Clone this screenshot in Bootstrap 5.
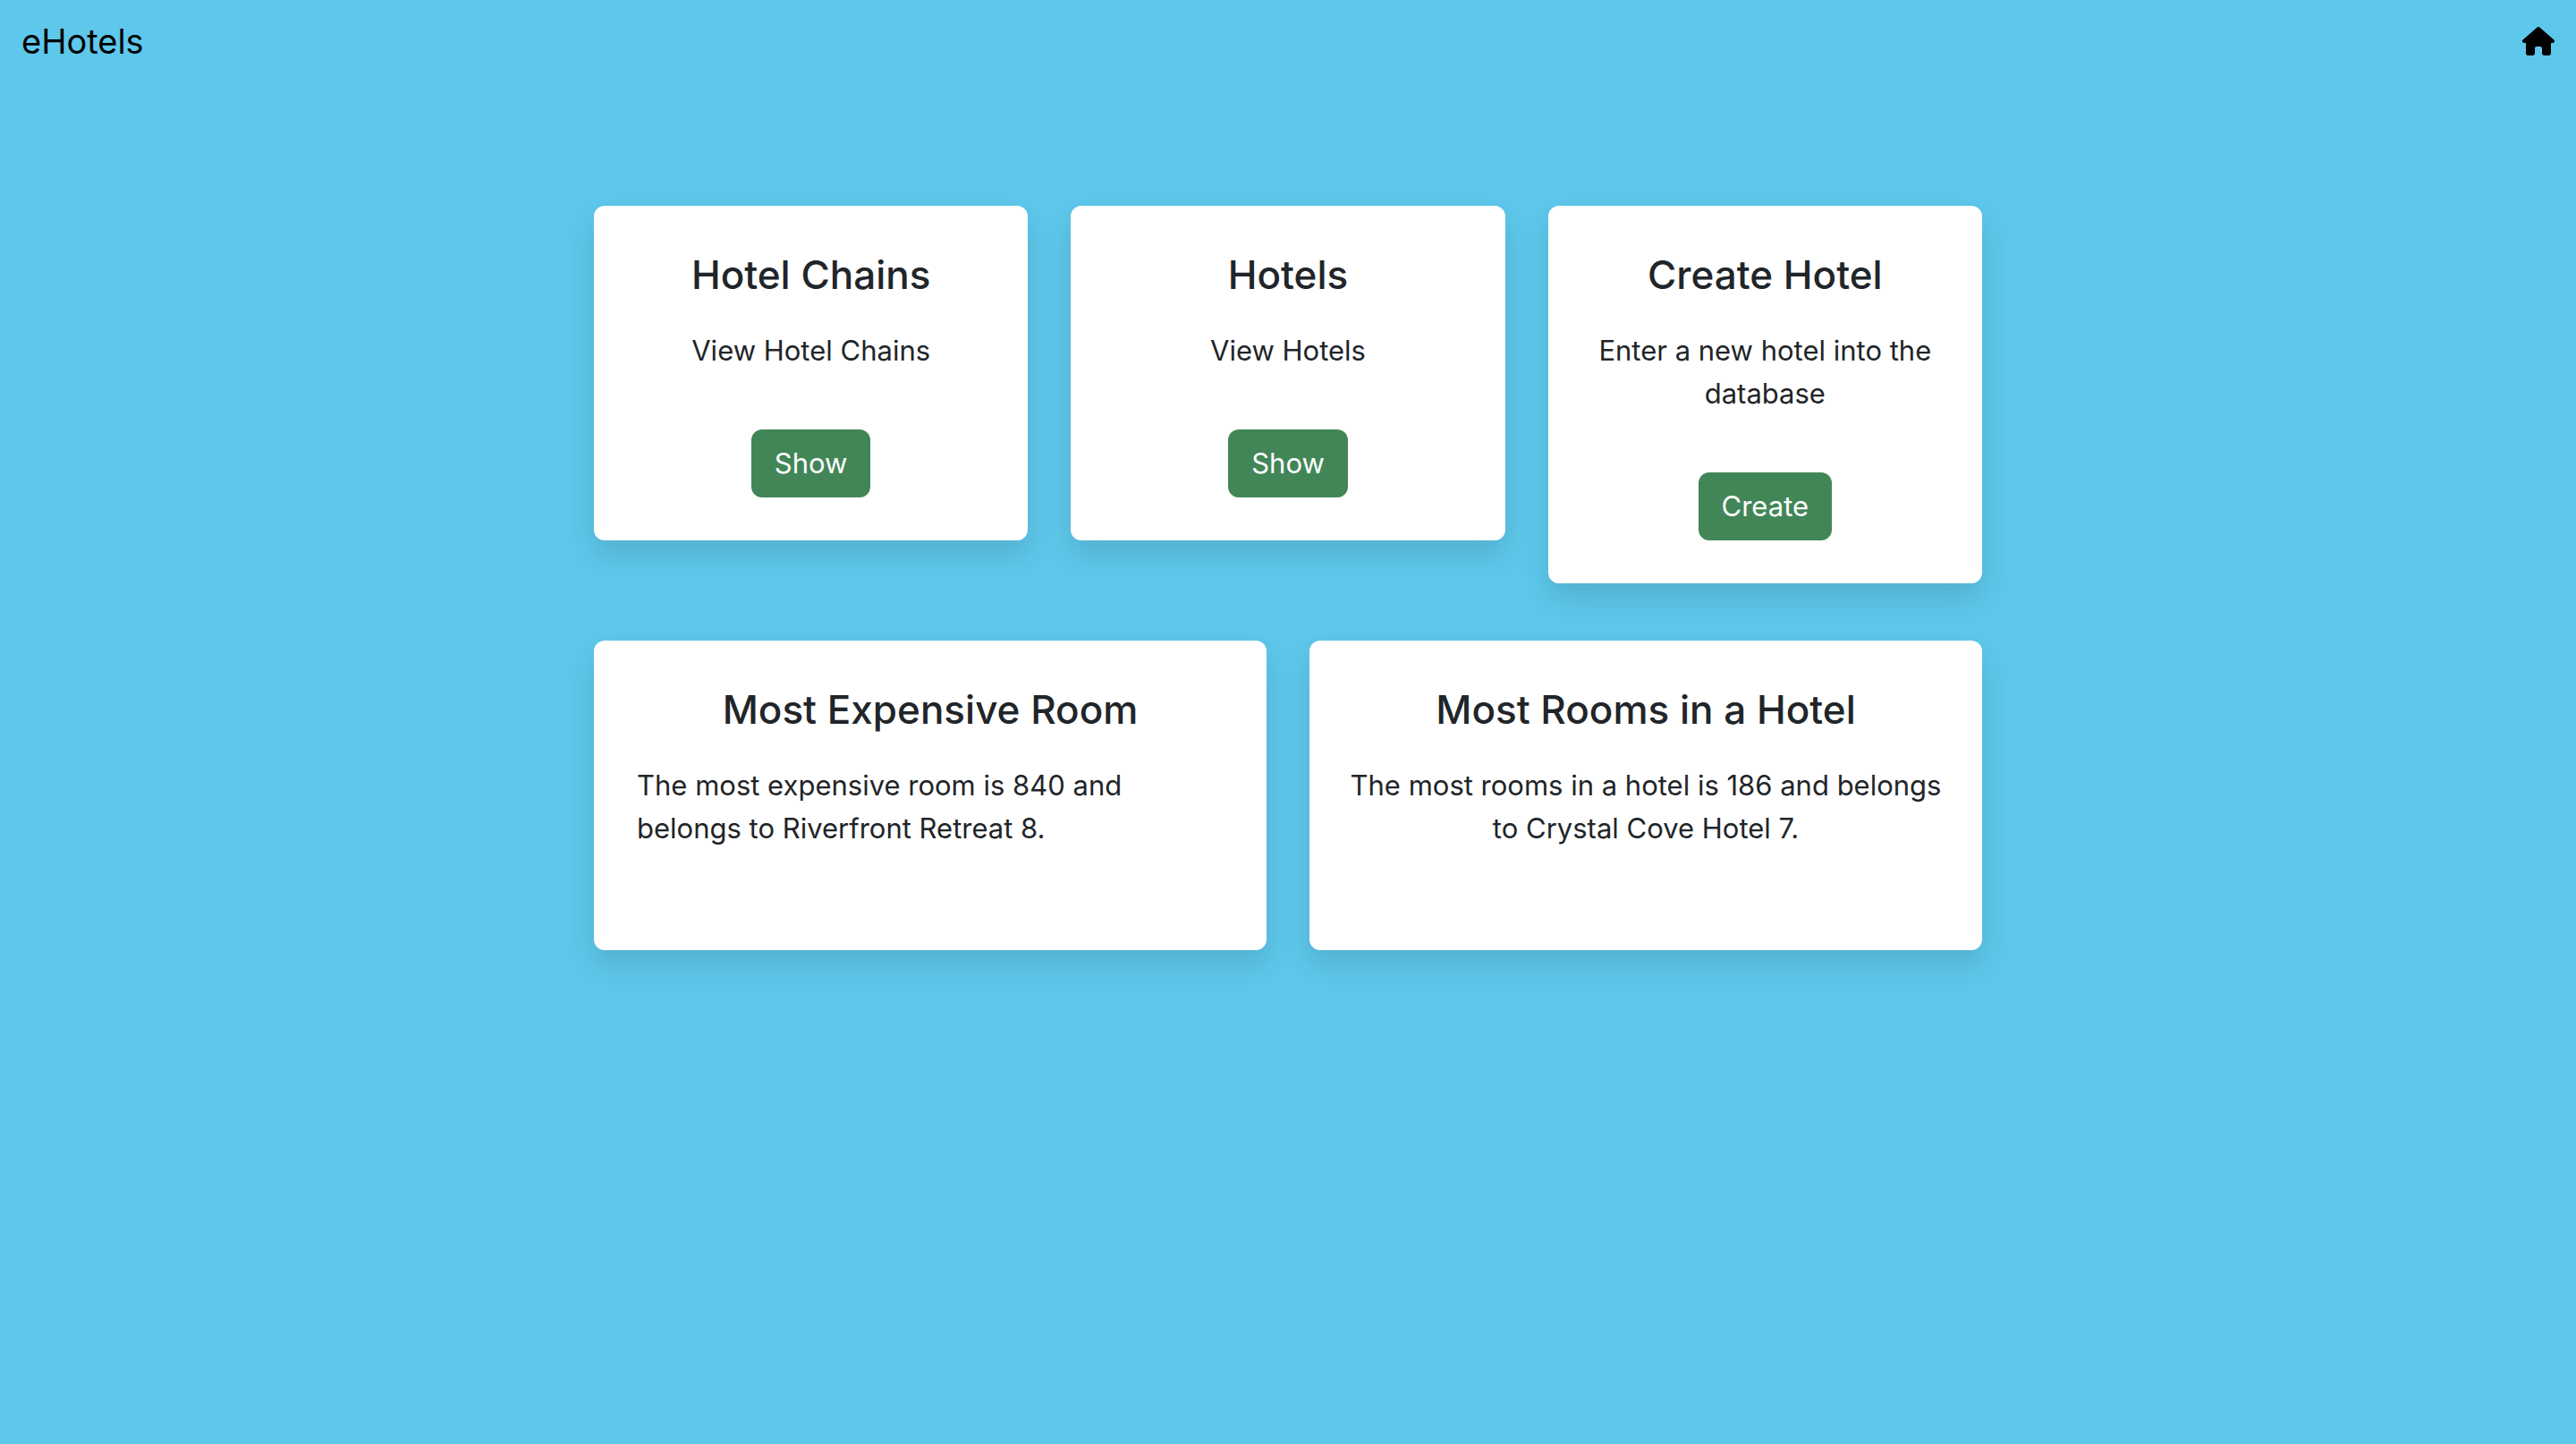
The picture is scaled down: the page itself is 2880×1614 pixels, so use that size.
<!DOCTYPE html>
<html lang="en">
<head>
<meta charset="utf-8">
<meta name="viewport" content="width=device-width, initial-scale=1">
<title>eHotels</title>
<link rel="stylesheet" href="https://cdn.jsdelivr.net/npm/bootstrap@5.3.0/dist/css/bootstrap.min.css">
<style>
  html { font-size: 32px; }
  body {
    --bs-body-font-family: Inter, "Liberation Sans", sans-serif;
    --page-text: 31px;
    font-size: var(--page-text);
    line-height: 48px;
    background: #5dc8ec;
  }
  .navbar-brand { font-size: 38px; line-height: 60px; color: #000; }
  .home-icon { width: 36px; height: 32px; display: block; }
  .dashboard { max-width: 50rem; padding-top: 138px; }
  .dashboard > .row { margin-bottom: 64px; }
  .card { --bs-card-border-width: 0; --bs-card-border-radius: 12px; }
  .card-body { --bs-card-spacer-x: 48px; --bs-card-spacer-y: 48px; }
  .card-body-wide { --bs-card-spacer-x: 40px; }
  .card-title { font-size: 44px; line-height: 58px; margin-bottom: 32px; }
  .card-text, .card-text:last-child { margin-bottom: 64px; }
  .btn-success {
    --bs-btn-bg: #428658;
    --bs-btn-border-color: #428658;
    --bs-btn-border-width: 2px;
    --bs-btn-border-radius: 12px;
    --bs-btn-font-size: var(--page-text);
    --bs-btn-padding-x: 24px;
    --bs-btn-padding-y: 12px;
    line-height: 48px;
  }
</style>
</head>
<body class="min-vh-100">
<nav class="navbar py-2">
  <div class="container-fluid">
    <a class="navbar-brand m-0 py-0" href="#">eHotels</a>
    <a href="#" aria-label="Home">
      <svg class="home-icon" viewBox="0 0 576 512" fill="#000" aria-hidden="true"><path d="M575.8 255.5c0 18-15 32.1-32 32.1h-32l.7 160.2c0 2.7-.2 5.4-.5 8.1V472c0 22.1-17.9 40-40 40H456c-1.1 0-2.2 0-3.3-.1c-1.4 .1-2.8 .1-4.2 .1H416 392c-22.1 0-40-17.9-40-40V448 384c0-17.7-14.3-32-32-32H256c-17.7 0-32 14.3-32 32v64 24c0 22.1-17.9 40-40 40H160 128.1c-1.5 0-3-.1-4.5-.2c-1.2 .1-2.4 .2-3.6 .2H104c-22.1 0-40-17.9-40-40V360c0-.9 0-1.9 .1-2.8V287.6H32c-18 0-32-14-32-32.1c0-9 3-17 10-24L266.4 8c7-7 15-8 22-8s15 2 21 7L564.8 231.5c8 7 12 15 11 24z"/></svg>
    </a>
  </div>
</nav>
<main class="container dashboard">
  <div class="row align-items-start">
    <div class="col-4">
      <div class="card shadow"><div class="card-body text-center">
        <h2 class="card-title">Hotel Chains</h2>
        <p class="card-text">View Hotel Chains</p>
        <button type="button" class="btn btn-success">Show</button>
      </div></div>
    </div>
    <div class="col-4">
      <div class="card shadow"><div class="card-body text-center">
        <h2 class="card-title">Hotels</h2>
        <p class="card-text">View Hotels</p>
        <button type="button" class="btn btn-success">Show</button>
      </div></div>
    </div>
    <div class="col-4">
      <div class="card shadow"><div class="card-body text-center">
        <h2 class="card-title">Create Hotel</h2>
        <p class="card-text">Enter a new hotel into the database</p>
        <button type="button" class="btn btn-success">Create</button>
      </div></div>
    </div>
  </div>
  <div class="row">
    <div class="col-6">
      <div class="card shadow"><div class="card-body">
        <h2 class="card-title text-center">Most Expensive Room</h2>
        <p class="card-text">The most expensive room is 840 and belongs to Riverfront Retreat 8.</p>
      </div></div>
    </div>
    <div class="col-6">
      <div class="card shadow"><div class="card-body card-body-wide text-center">
        <h2 class="card-title">Most Rooms in a Hotel</h2>
        <p class="card-text">The most rooms in a hotel is 186 and belongs to Crystal Cove Hotel 7.</p>
      </div></div>
    </div>
  </div>
</main>
<script src="https://cdn.jsdelivr.net/npm/bootstrap@5.3.0/dist/js/bootstrap.bundle.min.js"></script>
</body>
</html>
